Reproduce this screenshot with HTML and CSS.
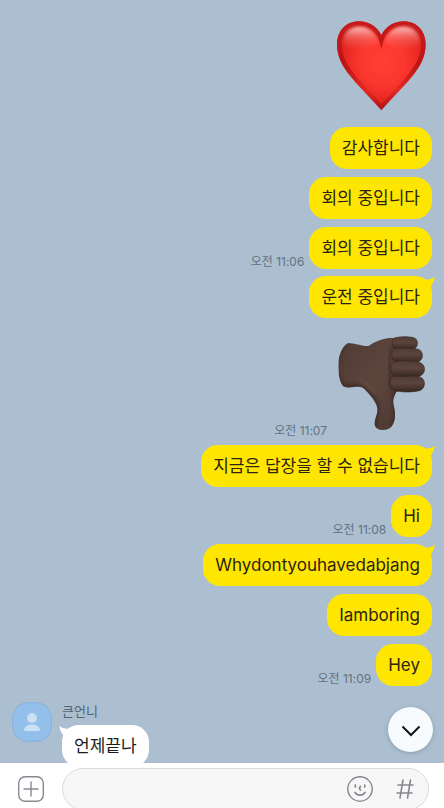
FILE: index.html
```html
<!DOCTYPE html>
<html lang="ko">
<head>
<meta charset="utf-8">
<meta name="viewport" content="width=device-width, initial-scale=1">
<title>큰언니</title>
<link rel="stylesheet" href="styles.css">
</head>
<body>
<main class="chat">
  <section class="group">
    <div class="message">
      <svg class="sticker" viewBox="24 21 300 339" role="img" aria-label="하트">
        <defs>
          <radialGradient id="heart-body" gradientUnits="userSpaceOnUse" cx="176" cy="190" r="150">
            <stop offset="0" stop-color="#ff4034"/><stop offset=".45" stop-color="#fb372f"/><stop offset=".8" stop-color="#e42620"/><stop offset="1" stop-color="#c91a18"/>
          </radialGradient>
          <linearGradient id="heart-shine" x1="0" y1="0" x2="0" y2="1">
            <stop offset="0" stop-color="#fff" stop-opacity=".72"/><stop offset=".5" stop-color="#ffaaa0" stop-opacity=".3"/><stop offset="1" stop-color="#ff6055" stop-opacity="0"/>
          </linearGradient>
          <linearGradient id="heart-rim" x1="0" y1="0" x2="0" y2="1">
            <stop offset="0" stop-color="#c61a1a"/><stop offset=".5" stop-color="#bd1416"/><stop offset=".8" stop-color="#d11e1a" stop-opacity=".4"/><stop offset="1" stop-color="#b81617"/>
          </linearGradient>
          <filter id="soft"><feGaussianBlur stdDeviation="4"/></filter>
        </defs>
        <path d="M172 331C154 309 113 273 82 235C56 203 39 174 39 137C39 95 66 67 104 67C137 67 161 84 172 113C183 84 207 67 240 67C278 67 305 95 305 137C305 174 288 203 262 235C231 273 190 309 172 331Z" fill="url(#heart-body)"/>
        <path d="M172 324C153 302 116 268 87 231C62 199 46 172 46 137C46 99 70 74 104 74C138 74 163 94 172 125C181 94 206 74 240 74C274 74 298 99 298 137C298 172 282 199 257 231C228 268 191 302 172 324Z" fill="none" stroke="url(#heart-rim)" stroke-width="13"/>
        <path d="M56 132C58 101 76 83 106 83C133 83 154 99 162 128C151 151 73 178 56 132Z" fill="url(#heart-shine)" filter="url(#soft)"/>
        <path d="M182 128C190 99 211 83 238 83C268 83 286 101 288 132C271 178 193 151 182 128Z" fill="url(#heart-shine)" filter="url(#soft)"/>
      </svg>
    </div>
    <div class="message"><p class="bubble">감사합니다</p></div>
    <div class="message"><p class="bubble">회의 중입니다</p></div>
    <div class="message"><time class="time">오전 11:06</time><p class="bubble">회의 중입니다</p></div>
  </section>

  <section class="group">
    <div class="message">
      <p class="bubble">운전 중입니다<svg class="tail" viewBox="0 0 12 12" aria-hidden="true"><path d="M0 3Q5 5 12 1Q11 6 8 10L4 12Z"/></svg></p>
    </div>
  </section>

  <section class="group">
    <div class="message">
      <time class="time">오전 11:07</time>
      <svg class="sticker" viewBox="24 0 300 339" role="img" aria-label="싫어요">
        <defs>
          <linearGradient id="skin" x1="0" y1="0" x2="1" y2="1">
            <stop offset="0" stop-color="#4d3a35"/><stop offset=".5" stop-color="#5d453d"/><stop offset="1" stop-color="#493630"/>
          </linearGradient>
          <linearGradient id="finger" x1="0" y1="0" x2="0" y2="1">
            <stop offset="0" stop-color="#503c36"/><stop offset=".45" stop-color="#5b443c"/><stop offset="1" stop-color="#35251f"/>
          </linearGradient>
          <clipPath id="hand"><path d="M72 54C92 54 116 65 133 63C154 49 178 38 208 38L247 40L242 190L217 201C209 216 206 225 209 241C214 263 216 283 206 299C199 311 188 316 174 315C160 314 151 307 152 293C154 276 162 266 160 250C157 229 137 209 124 195C114 184 105 185 92 186C76 188 61 188 56 182C47 168 43 148 43 121C43 91 54 64 72 54Z"/></clipPath>
        </defs>
        <g clip-path="url(#hand)">
          <rect x="40" y="35" width="210" height="285" fill="url(#skin)"/>
          <path d="M43 140C44 170 55 180 67 182C92 180 112 177 125 194C145 215 163 229 162 253C159 275 149 285 158 308" fill="none" stroke="#30211c" stroke-width="10" opacity=".6" filter="url(#soft)"/>
          <path d="M216 197C208 214 208 229 212 247C218 273 214 291 200 310" fill="none" stroke="#30211c" stroke-width="10" opacity=".65" filter="url(#soft)"/>
          <path d="M205 65C193 90 194 118 199 138C194 163 187 181 210 195" fill="none" stroke="#32231d" stroke-width="8" opacity=".6" filter="url(#soft)"/>
          <path d="M69 59C52 74 46 93 47 121" fill="none" stroke="#392a25" stroke-width="6" opacity=".5" filter="url(#soft)"/>
          <path d="M103 160C119 174 141 185 151 203" fill="none" stroke="#705348" stroke-width="10" opacity=".35" filter="url(#soft)"/>
        </g>
        <g fill="url(#finger)" stroke="#372720" stroke-width="2">
          <path d="M214 38C232 34 255 35 269 38C283 42 284 63 272 71C254 76 224 75 210 71C202 63 203 43 214 38Z"/>
          <path d="M211 72C236 67 265 70 283 73C298 79 299 101 286 109C262 115 229 114 211 109C200 102 202 78 211 72Z"/>
          <path d="M211 110C238 106 266 107 285 112C306 117 307 145 288 153C264 158 230 158 207 151C196 140 198 116 211 110Z"/>
          <path d="M207 153C232 158 264 150 285 155C307 160 306 191 286 197C261 202 230 203 209 195C196 184 195 162 207 153Z"/>
        </g>
      </svg>
    </div>
  </section>

  <section class="group">
    <div class="message">
      <p class="bubble">지금은 답장을 할 수 없습니다<svg class="tail" viewBox="0 0 12 12" aria-hidden="true"><path d="M0 3Q5 5 12 1Q11 6 8 10L4 12Z"/></svg></p>
    </div>
    <div class="message"><time class="time">오전 11:08</time><p class="bubble">Hi</p></div>
  </section>

  <section class="group">
    <div class="message">
      <p class="bubble">Whydontyouhavedabjang<svg class="tail" viewBox="0 0 12 12" aria-hidden="true"><path d="M0 3Q5 5 12 1Q11 6 8 10L4 12Z"/></svg></p>
    </div>
    <div class="message"><p class="bubble">Iamboring</p></div>
    <div class="message"><time class="time">오전 11:09</time><p class="bubble">Hey</p></div>
  </section>

  <section class="incoming">
    <svg class="avatar" viewBox="0 0 40 40" aria-hidden="true">
      <path class="avatar-shape" d="M20 .5C34 .5 39.500 6 39.500 20S34 39.500 20 39.500S.5 34 .5 20S6 .5 20 .5Z"/>
      <circle class="avatar-person" cx="20" cy="16" r="5"/>
      <path class="avatar-person" d="M12 29C12 25 15 22.500 20 22.500S28 25 28 29Z"/>
    </svg>
    <div class="incoming-body">
      <span class="sender">큰언니</span>
      <p class="bubble bubble-white">언제끝나<svg class="tail tail-left" viewBox="0 0 12 12" aria-hidden="true"><path d="M12 3Q5 5 0 1Q1 6 4 10L8 12Z"/></svg></p>
    </div>
  </section>

  <button class="scroll-down" type="button" aria-label="맨 아래로">
    <svg viewBox="0 0 20 12" aria-hidden="true"><path d="M1.500 1.500L10 10L18.500 1.500"/></svg>
  </button>
</main>

<form class="composer">
  <button class="icon-button" type="button" aria-label="추가">
    <svg viewBox="0 0 26 26" aria-hidden="true"><rect x=".7" y=".7" width="24.600" height="24.600" rx="6.500"/><path d="M13 6V20M6 13H20"/></svg>
  </button>
  <div class="field">
    <input class="field-input" type="text" aria-label="메시지">
    <button class="icon-button" type="button" aria-label="이모티콘">
      <svg viewBox="0 0 26 26" aria-hidden="true"><circle cx="13" cy="13" r="12.200"/><path d="M8.300 9V11M17.700 9V11M13.500 10.500Q11.500 12 13.500 14M8 16.500C10 20 16 20 18 16.500" stroke-width="1.700"/></svg>
    </button>
    <button class="icon-button" type="button" aria-label="샵검색">
      <svg viewBox="0 0 26 26" aria-hidden="true"><path d="M11 4L8 22M18.500 4L15.500 22M6 9H21M5 17H20" stroke-width="1.600"/></svg>
    </button>
  </div>
</form>
</body>
</html>
```
FILE: styles.css
```css
* {
  box-sizing: border-box;
}

body {
  display: flex;
  flex-direction: column;
  height: 100vh;
  margin: 0;
  overflow: hidden;
  background: #abbfd1;
  color: #2b2412;
  font-family: Inter, "Noto Sans CJK KR", sans-serif;
  font-size: 17px;
}

p {
  margin: 0;
}

button {
  padding: 0;
  border: 0;
  background: none;
}

svg {
  display: block;
}

.chat {
  position: relative;
  display: flex;
  flex: 1;
  flex-direction: column;
  gap: 7px;
  min-height: 0;
  padding: 6px 12px 0;
  overflow: hidden;
}

.group {
  display: flex;
  flex: none;
  flex-direction: column;
  gap: 8px;
}

.message {
  display: flex;
  align-items: flex-end;
  justify-content: flex-end;
  gap: 5px;
}

.bubble {
  position: relative;
  padding: 9px 12px;
  border-radius: 17px;
  background: #ffe600;
  line-height: 24px;
  white-space: nowrap;
}

.tail {
  position: absolute;
  top: 0;
  right: -3px;
  width: 12px;
  height: 12px;
  fill: #ffe600;
}

.time {
  color: #63717e;
  font-size: 12px;
  line-height: 14px;
}

.sticker {
  width: 100px;
  height: 113px;
}

.incoming {
  display: flex;
  flex: none;
  align-items: flex-start;
  gap: 10px;
  padding-top: 9px;
}

.avatar {
  width: 40px;
  height: 40px;
}

.avatar-shape {
  fill: #92c0ea;
  stroke: #86b2db;
}

.avatar-person {
  fill: #c9dff2;
}

.incoming-body {
  display: flex;
  flex-direction: column;
  align-items: flex-start;
  gap: 5px;
}

.sender {
  color: #566573;
  font-size: 13px;
  line-height: 18px;
}

.bubble-white {
  background: #fff;
  color: #1d1d1d;
}

.tail-left {
  right: auto;
  left: -3px;
  fill: #fff;
}

.scroll-down {
  position: absolute;
  right: 11px;
  bottom: 11px;
  display: grid;
  place-items: center;
  width: 45px;
  height: 45px;
  border-radius: 50%;
  background: #f8fbfd;
  box-shadow: 0 1px 4px rgb(50 70 90 / 30%);
}

.scroll-down svg {
  width: 20px;
  height: 12px;
  margin-top: 2px;
  fill: none;
  stroke: #151515;
  stroke-width: 2;
}

.composer {
  display: flex;
  flex: none;
  align-items: flex-start;
  gap: 18px;
  height: 45px;
  padding: 5px 15px 0 18px;
  overflow: hidden;
  background: #fff;
}

.icon-button {
  flex: none;
  margin-top: 8px;
}

.icon-button svg {
  width: 26px;
  height: 26px;
  fill: none;
  stroke: #868990;
  stroke-width: 1.4;
  stroke-linecap: round;
}

.field {
  display: flex;
  flex: 1;
  align-items: flex-start;
  gap: 19px;
  min-width: 0;
  height: 42px;
  padding: 0 10px 0 18px;
  border: 1px solid #d9dadc;
  border-radius: 21px;
  background: #f7f7f8;
}

.field .icon-button {
  margin-top: 7px;
}

.field-input {
  flex: 1;
  min-width: 0;
  height: 40px;
  padding: 0;
  border: 0;
  outline: 0;
  background: none;
  font: inherit;
}
```
